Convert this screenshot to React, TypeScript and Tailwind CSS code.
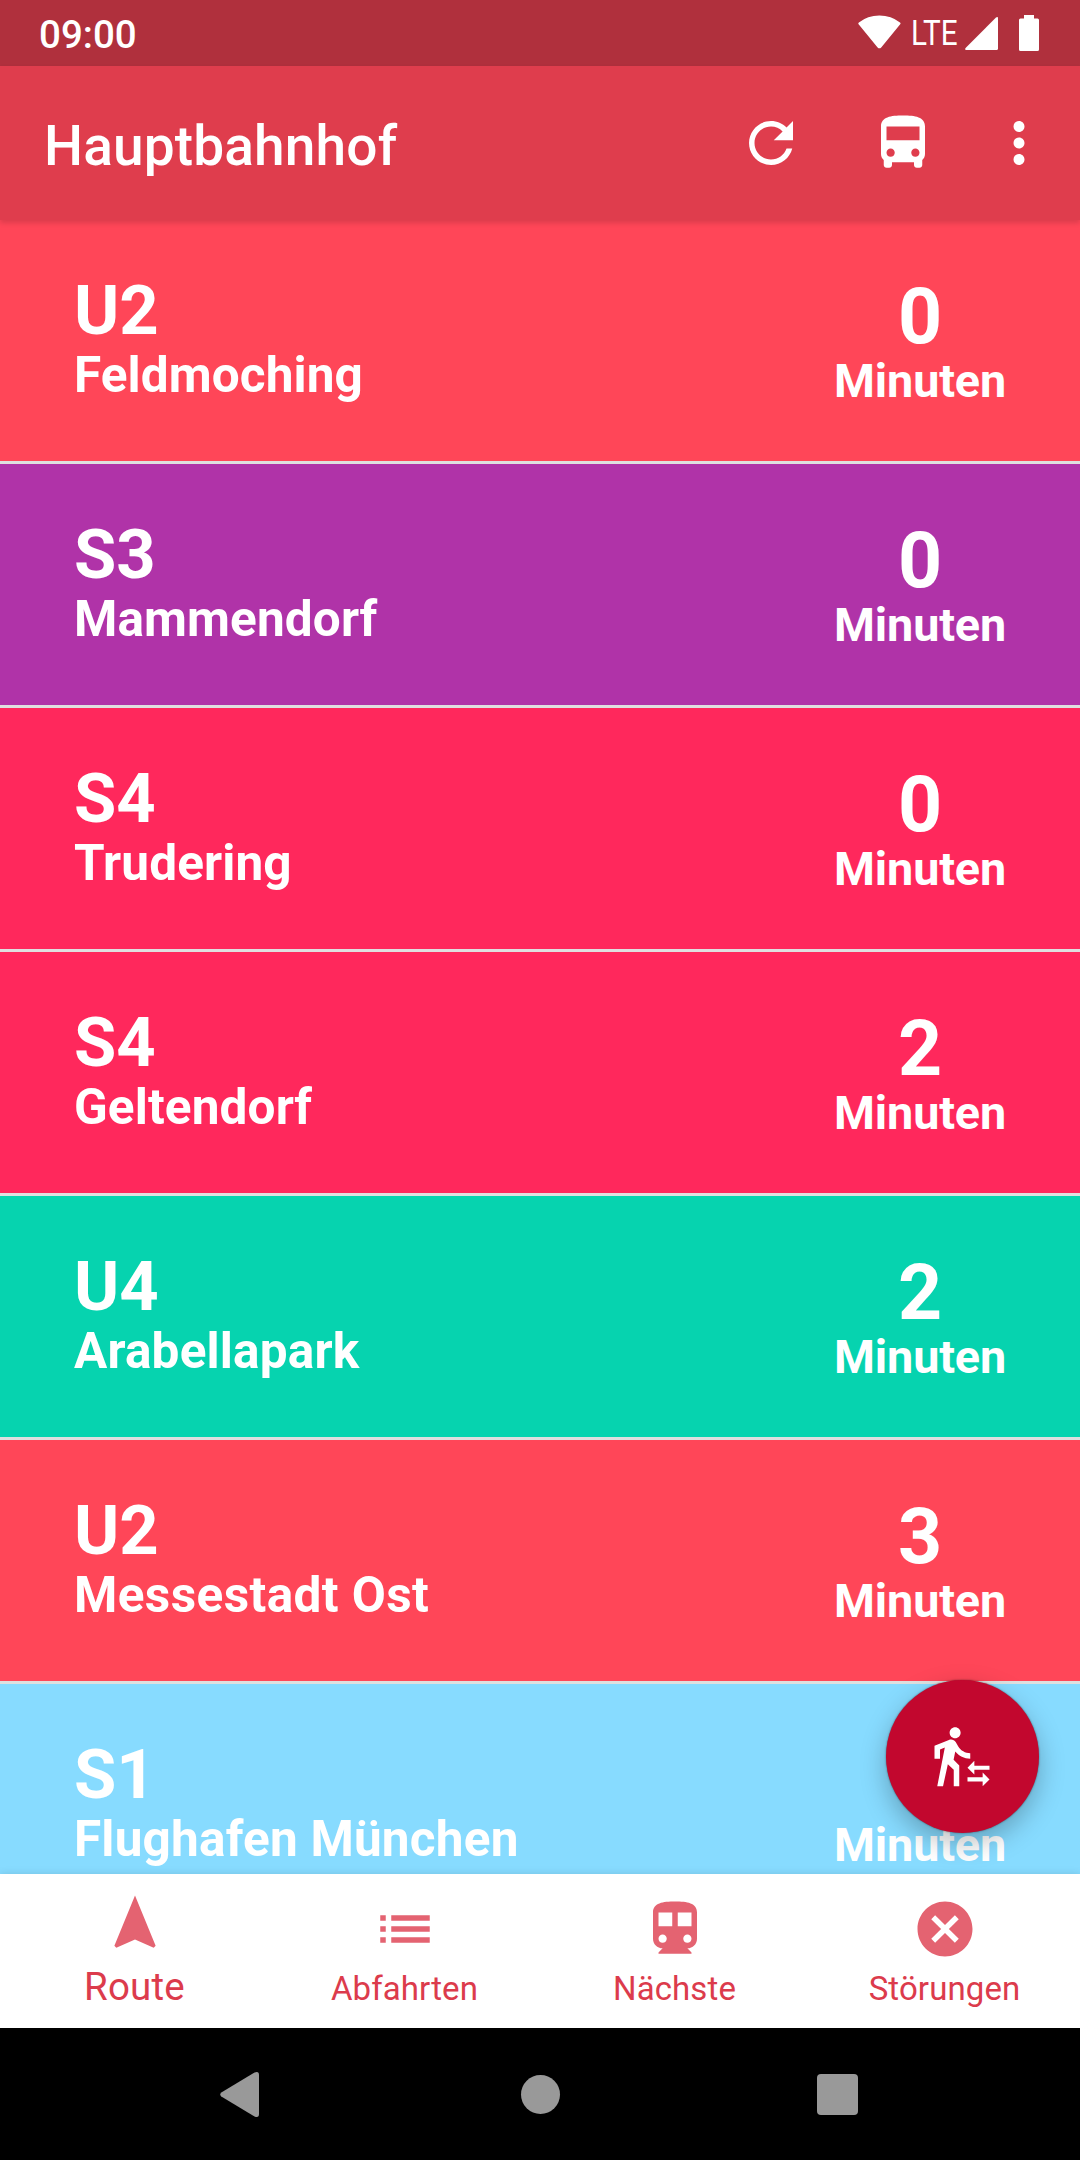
import React from "react";

type Departure = {
  line: string;
  destination: string;
  minutes: number;
  color: string;
  tracking: string;
};

const departures: Departure[] = [
  { line: "U2", destination: "Feldmoching", minutes: 0, color: "bg-[#ff4658]", tracking: "tracking-[0.1px]" },
  { line: "S3", destination: "Mammendorf", minutes: 0, color: "bg-[#b033a8]", tracking: "tracking-[0.13px]" },
  { line: "S4", destination: "Trudering", minutes: 0, color: "bg-[#ff285c]", tracking: "tracking-[0.1px]" },
  { line: "S4", destination: "Geltendorf", minutes: 2, color: "bg-[#ff285c]", tracking: "tracking-[0.13px]" },
  { line: "U4", destination: "Arabellapark", minutes: 2, color: "bg-[#06d3af]", tracking: "tracking-[0.18px]" },
  { line: "U2", destination: "Messestadt Ost", minutes: 3, color: "bg-[#ff4658]", tracking: "tracking-[0.4px]" },
  { line: "S1", destination: "Flughafen München", minutes: 5, color: "bg-[#87dbff]", tracking: "tracking-[0.2px]" },
];

const icons = {
  refresh:
    "M17.65 6.35C16.2 4.9 14.21 4 12 4c-4.42 0-7.99 3.58-7.99 8s3.57 8 7.99 8c3.73 0 6.84-2.55 7.73-6h-2.08c-.82 2.33-3.04 4-5.65 4-3.31 0-6-2.69-6-6s2.69-6 6-6c1.66 0 3.14.69 4.22 1.78L13 11h7V4l-2.35 2.35z",
  bus: "M4 16c0 .88.39 1.67 1 2.22V20c0 .55.45 1 1 1h1c.55 0 1-.45 1-1v-1h8v1c0 .55.45 1 1 1h1c.55 0 1-.45 1-1v-1.78c.61-.55 1-1.34 1-2.22V6c0-3.5-3.58-4-8-4s-8 .5-8 4v10zm3.5 1c-.83 0-1.5-.67-1.5-1.5S6.67 14 7.5 14s1.5.67 1.5 1.5S8.33 17 7.5 17zm9 0c-.83 0-1.5-.67-1.5-1.5s.67-1.5 1.5-1.5 1.5.67 1.5 1.5-.67 1.5-1.5 1.5zm1.5-6H6V6h12v5z",
  more: "M12 8c1.1 0 2-.9 2-2s-.9-2-2-2-2 .9-2 2 .9 2 2 2zm0 2c-1.1 0-2 .9-2 2s.9 2 2 2 2-.9 2-2-.9-2-2-2zm0 6c-1.1 0-2 .9-2 2s.9 2 2 2 2-.9 2-2-.9-2-2-2z",
  transfer:
    "M16.49 15.5v-1.75L14 16.25l2.49 2.5V17H22v-1.5zm3.02 4.25H14v1.5h5.51V23L22 20.5 19.51 18zM9.5 5.5c1.1 0 2-.9 2-2s-.9-2-2-2-2 .9-2 2 .9 2 2 2zM5.75 8.9L3 23h2.1l1.75-8L9 15v8h2v-7.55L8.95 13.4l.6-3C10.85 12 12.8 13 15 13v-2c-1.85 0-3.45-1-4.35-2.45l-.95-1.6C9.35 6.35 8.7 6 8 6c-.25 0-.5.05-.75.15L2 8.3V13h2V9.65l1.75-.75M6.850 15L9 17V23h2v-7.550L8.950 13.400z",
  navigation: "M12 2L4.5 20.29l.71.71L12 18l6.79 3 .71-.71z",
  list: "M3 13h2v-2H3v2zm0 4h2v-2H3v2zm0-8h2V7H3v2zm4 4h14v-2H7v2zm0 4h14v-2H7v2zM7 7v2h14V7H7z",
  subway:
    "M12 2c-4.42 0-8 .5-8 4v9.5C4 17.43 5.57 19 7.5 19L6 20.5v.5h12v-.5L16.5 19c1.93 0 3.5-1.57 3.5-3.5V6c0-3.5-3.58-4-8-4zM7.5 17c-.83 0-1.5-.67-1.5-1.5S6.67 14 7.5 14s1.5.67 1.5 1.5S8.33 17 7.5 17zm3.5-6H6V6h5v5zm5.5 6c-.83 0-1.5-.67-1.5-1.5s.67-1.5 1.5-1.5 1.5.67 1.5 1.5-.67 1.5-1.5 1.5zm1.5-6h-5V6h5v5z",
  cancel:
    "M12 2C6.47 2 2 6.47 2 12s4.47 10 10 10 10-4.47 10-10S17.53 2 12 2zm5 13.59L15.59 17 12 13.41 8.41 17 7 15.59 10.59 12 7 8.41 8.41 7 12 10.59 15.59 7 17 8.41 13.41 12 17 15.59z",
};

function Icon({ path, className = "" }: { path: string; className?: string }) {
  return (
    <svg viewBox="0 0 24 24" className={`size-[66px] shrink-0 fill-current ${className}`}>
      <path d={path} />
    </svg>
  );
}

function StatusBar() {
  return (
    <div className="flex h-[66px] shrink-0 items-start bg-[#b0303d] pr-[41px] pl-[39px]">
      <span className="mt-[11px] text-[38.5px] leading-[48px] font-medium">09:00</span>
      <svg viewBox="0 0 43 34" className="mt-[15px] ml-auto h-[34px] w-[43px] fill-current">
        <path d="M0.6 9.2Q-0.1 8.2 0.9 7.4Q9.5 0.4 21.4 0.4Q33.3 0.4 42 7.4Q43 8.2 42.2 9.2L23.2 32.4Q21.4 34.2 19.6 32.4Z" />
      </svg>
      <span className="ml-3 flex h-[48px] w-[44px] items-center">
        <span className="mt-[17px] -ml-[2px] origin-left scale-x-[0.86] text-[34.5px] leading-[48px]">LTE</span>
      </span>
      <svg viewBox="0 0 33 33" className="mt-[17px] ml-2 size-[33px] fill-current">
        <path d="M31 .6Q33-.8 33 1.5V31.5Q33 33 31.5 33H1.5Q-.8 33 .6 31Z" />
      </svg>
      <svg viewBox="0 0 20 36" className="mt-[15px] ml-[21px] h-[36px] w-[20px] fill-current">
        <path d="M5 0h10v3.6h3.5Q20 3.6 20 5.1V34.5Q20 36 18.5 36H1.5Q0 36 0 34.5V5.1Q0 3.6 1.5 3.6H5z" />
      </svg>
    </div>
  );
}

function Toolbar() {
  return (
    <header className="relative z-10 flex h-[154px] shrink-0 items-center bg-[#df3d4d] pr-7 pl-11 shadow-[0_3px_5px_rgba(0,0,0,0.14)]">
      <h1 className="mt-[6px] text-[55px] leading-[64px] font-medium tracking-[0.15px]">Hauptbahnhof</h1>
      <Icon path={icons.refresh} className="ml-auto" />
      <Icon path={icons.bus} className="ml-[66px]" />
      <Icon path={icons.more} className="ml-[50px]" />
    </header>
  );
}

function DepartureRow({ line, destination, minutes, color, tracking }: Departure) {
  return (
    <li
      className={`box-content flex h-[241px] shrink-0 justify-between border-b-[3px] border-[#dfdfdf] font-bold ${color}`}
    >
      <div className="pt-[54px] pl-[74px]">
        <div className="text-[68.75px] leading-[74px]">{line}</div>
        <div className={`-mt-px text-[49.5px] leading-[56px] ${tracking}`}>{destination}</div>
      </div>
      <div className="pt-[57px] pr-[74px] text-center">
        <div className="text-[77px] leading-[80px]">{minutes}</div>
        <div className="text-[46.75px] leading-[48px] tracking-[-0.15px]">Minuten</div>
      </div>
    </li>
  );
}

function Tab({ path, label, active = false }: { path: string; label: string; active?: boolean }) {
  return (
    <div className={`flex flex-col items-center ${active ? "pt-[16px]" : "pt-[22px]"}`}>
      <Icon path={path} className="text-[#e46371]" />
      <span
        className={
          active
            ? "mt-[9px] pr-px text-[38.5px] leading-[44px] tracking-[0.2px]"
            : "mt-[7px] pr-px text-[33px] leading-[40px] tracking-[0.1px]"
        }
      >
        {label}
      </span>
    </div>
  );
}

export default function App() {
  return (
    <div className="flex h-[2160px] w-[1080px] flex-col overflow-hidden bg-black font-[Roboto,sans-serif] text-white">
      <StatusBar />
      <Toolbar />
      <main className="relative h-[1654px] shrink-0 overflow-hidden">
        <ul className="flex flex-col">
          {departures.map((d) => (
            <DepartureRow key={d.line + d.destination} {...d} />
          ))}
        </ul>
        <button className="absolute right-[41.5px] bottom-[41.5px] flex size-[153px] items-center justify-center rounded-full bg-[#c2072e] shadow-[0_10px_26px_rgba(0,0,0,0.26),0_0_2px_rgba(0,0,0,0.5)]">
          <Icon path={icons.transfer} className="-ml-px" />
        </button>
      </main>
      <nav className="relative z-10 grid h-[154px] shrink-0 grid-cols-4 bg-white text-[#dc3b4c] shadow-[0_0_8px_rgba(0,0,0,0.12)]">
        <Tab path={icons.navigation} label="Route" active />
        <Tab path={icons.list} label="Abfahrten" />
        <Tab path={icons.subway} label="Nächste" />
        <Tab path={icons.cancel} label="Störungen" />
      </nav>
      <div className="relative z-20 flex h-[132px] shrink-0 items-center bg-black pl-[220px] text-[#999]">
        <svg viewBox="0 0 39 45" className="h-[45px] w-[39px] fill-current">
          <path d="M1.3 20.6L34.5.6Q39-1.2 39 3V42Q39 46.2 34.5 44.4L1.3 24.4Q-.8 22.5 1.3 20.6Z" />
        </svg>
        <div className="mr-[257px] ml-[262px] size-[39px] rounded-full bg-current" />
        <div className="size-[41px] rounded-[4px] bg-current" />
      </div>
    </div>
  );
}
